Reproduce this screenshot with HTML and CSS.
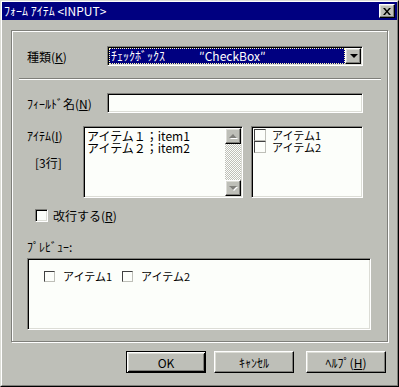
FILE: index.html
```html
<!doctype html>
<html lang="ja">
<head>
<meta charset="utf-8">
<title>ﾌｫｰﾑ ｱｲﾃﾑ &lt;INPUT&gt;</title>
<link rel="stylesheet" href="styles.css">
</head>
<body>

<div class="window">
<div class="frame">

	<div class="titlebar">
		<span class="title">ﾌｫｰﾑ ｱｲﾃﾑ &lt;INPUT&gt;</span>
		<span class="close raised">
			<svg width="8" height="7" viewBox="0 0 8 7"><path d="M0 0h2l2 2.5 2-2.5h2l-3 3.5 3 3.5h-2l-2-2.5-2 2.5h-2l3-3.5z" fill="#000"/></svg>
		</span>
	</div>

	<div class="client">

		<div class="group">

			<div class="row">
				<span class="lbl">種類(<u>K</u>)</span>
				<div class="field combo">
					<div class="combo-sel"><span>ﾁｪｯｸﾎﾞｯｸｽ</span><span class="combo-en">″CheckBox″</span></div>
					<div class="combo-btn raised"><span class="tri-down"></span></div>
				</div>
			</div>

			<div class="sep"></div>

			<div class="row row-field">
				<span class="lbl">ﾌｨｰﾙﾄﾞ名(<u>N</u>)</span>
				<div class="field text-input"></div>
			</div>

			<div class="row row-items">
				<div class="lbl lbl-items">
					<div>ｱｲﾃﾑ(<u>I</u>)</div>
					<div class="lines">[3行]</div>
				</div>
				<div class="field memo">
					<div class="memo-text">
						<div>アイテム１；item1</div>
						<div>アイテム２；item2</div>
					</div>
					<div class="vscroll">
						<div class="sb-btn raised"><span class="tri-up"></span></div>
						<div class="sb-track"></div>
						<div class="sb-btn raised"><span class="tri-dn"></span></div>
					</div>
				</div>
				<div class="field checklist">
					<div class="cl-item"><span class="cl-box"></span>アイテム1</div>
					<div class="cl-item"><span class="cl-box"></span>アイテム2</div>
				</div>
			</div>

			<div class="row row-check">
				<span class="check"></span>
				<span>改行する(<u>R</u>)</span>
			</div>

			<div class="preview-lbl">ﾌﾟﾚﾋﾞｭｰ:</div>
			<div class="field preview">
				<span class="pv-box"></span><span class="pv-text">アイテム1</span>
				<span class="pv-box"></span><span class="pv-text">アイテム2</span>
			</div>

		</div>

		<div class="buttons">
			<div class="btn default">OK</div>
			<div class="btn raised btn-cancel">ｷｬﾝｾﾙ</div>
			<div class="btn raised btn-help">ﾍﾙﾌﾟ(<u>H</u>)</div>
		</div>

	</div>

</div>
</div>

</body>
</html>
```

FILE: styles.css
```css
* { box-sizing: border-box; }
body { background: #bebfb8; color: #000; font: 12px "Noto Sans CJK JP", "Liberation Sans", sans-serif; margin: 0; }
u { text-decoration: underline; text-underline-offset: 1px; }

.window { background: #bebfb8; border: 1px solid; border-color: #dcddd6 #000 #000 #dcddd6; height: 387px; width: 399px; }
.frame { border: 1px solid; border-color: #fff #7f7f7a #7f7f7a #fff; height: 100%; }

.raised { background: #bebfb8; border: 1px solid; border-color: #fff #000 #000 #fff; box-shadow: inset -1px -1px #7f7f7a, inset 1px 1px #dcddd6; }
.field { background: #fcfefa; border: 1px solid; border-color: #7f7f7a #fff #fff #7f7f7a; box-shadow: inset 1px 1px #000, inset -1px -1px #dcddd6; padding: 1px; }

/* title bar */
.titlebar { align-items: center; background: #000080; color: #fff; display: flex; height: 18px; justify-content: space-between; padding: 0 2px 0 2px; }
.title { line-height: 18px; }
.close { align-items: center; display: flex; height: 14px; justify-content: center; width: 16px; }

.client { padding: 10px 9px 0 9px; }

/* group box */
.group { border: 1px solid #7f7f7a; box-shadow: inset 1px 1px #fff, 1px 1px #fff; height: 312px; padding: 15px 0 0 15px; }

.row { align-items: center; display: flex; }
.lbl { width: 80px; }

.combo { display: flex; height: 20px; width: 256px; }
.combo-sel { background: #000080; border: 1px dotted #fffbb0; color: #fff; flex: 1; line-height: 13px; padding-left: 1px; white-space: nowrap; }
.combo-en { margin-left: 34px; }
.combo-btn { align-items: center; display: flex; height: 16px; justify-content: center; width: 16px; }
.tri-down { border-left: 4px solid transparent; border-right: 4px solid transparent; border-top: 4px solid #000; height: 0; margin-left: 1px; width: 0; }

.sep { border-bottom: 1px solid #fff; border-top: 1px solid #7f7f7a; height: 2px; margin: 12px 0 0 -8px; width: 362px; }

.row-field { margin-top: 13px; }
.text-input { height: 20px; width: 256px; }

.row-items { align-items: flex-start; margin-top: 13px; }
.lbl-items { line-height: 16px; padding-top: 2px; width: 56px; }
.lines { margin-top: 11px; padding-left: 8px; }

.memo { display: flex; height: 72px; width: 160px; }
.memo-text { flex: 1; line-height: 12px; padding: 2px 0 0 2px; white-space: nowrap; overflow: hidden; }
.vscroll { display: flex; flex-direction: column; width: 16px; }
.sb-btn { align-items: center; display: flex; height: 16px; justify-content: center; }
.sb-track { background: repeating-conic-gradient(#fcfefa 0 25%, #bebfb8 0 50%) 0 0 / 2px 2px; flex: 1; }
.tri-up, .tri-dn { border-left: 4px solid transparent; border-right: 4px solid transparent; filter: drop-shadow(1px 1px #fff); height: 0; width: 0; }
.tri-up { border-bottom: 4px solid #7f7f7a; }
.tri-dn { border-top: 4px solid #7f7f7a; }

.checklist { font-size: 11px; height: 72px; margin-left: 8px; padding: 2px 0 0 2px; width: 112px; }
.cl-item { align-items: center; display: flex; height: 12px; line-height: 12px; }
.cl-box { border: 1px solid; border-color: #404040 #bebfb8 #bebfb8 #404040; height: 12px; margin-right: 6px; width: 12px; }

.row-check { margin: 9px 0 0 8px; }
.check { background: #fcfefa; border: 1px solid; border-color: #7f7f7a #fff #fff #7f7f7a; box-shadow: inset 1px 1px #000, inset -1px -1px #dcddd6; height: 13px; margin-right: 5px; width: 13px; }

.preview-lbl { line-height: 16px; margin-top: 15px; }
.preview { align-items: center; display: flex; font-size: 11px; height: 72px; margin-top: 3px; padding: 0 0 36px 16px; width: 344px; }
.pv-box { background: #fcfefa; border: 1px solid; border-color: #404040 #bebfb8 #bebfb8 #404040; height: 11px; margin-right: 8px; width: 11px; }
.pv-text { margin-right: 10px; }

/* buttons */
.buttons { display: flex; justify-content: flex-end; margin-top: 9px; padding-right: 2px; }
.btn { align-items: center; display: flex; height: 22px; justify-content: center; width: 80px; }
.btn.default { background: #bebfb8; border: 1px solid #000; box-shadow: inset 1px 1px #fff, inset -1px -1px #000, inset 2px 2px #dcddd6, inset -2px -2px #7f7f7a; }
.btn-cancel { margin-left: 8px; }
.btn-help { margin-left: 12px; }
```
